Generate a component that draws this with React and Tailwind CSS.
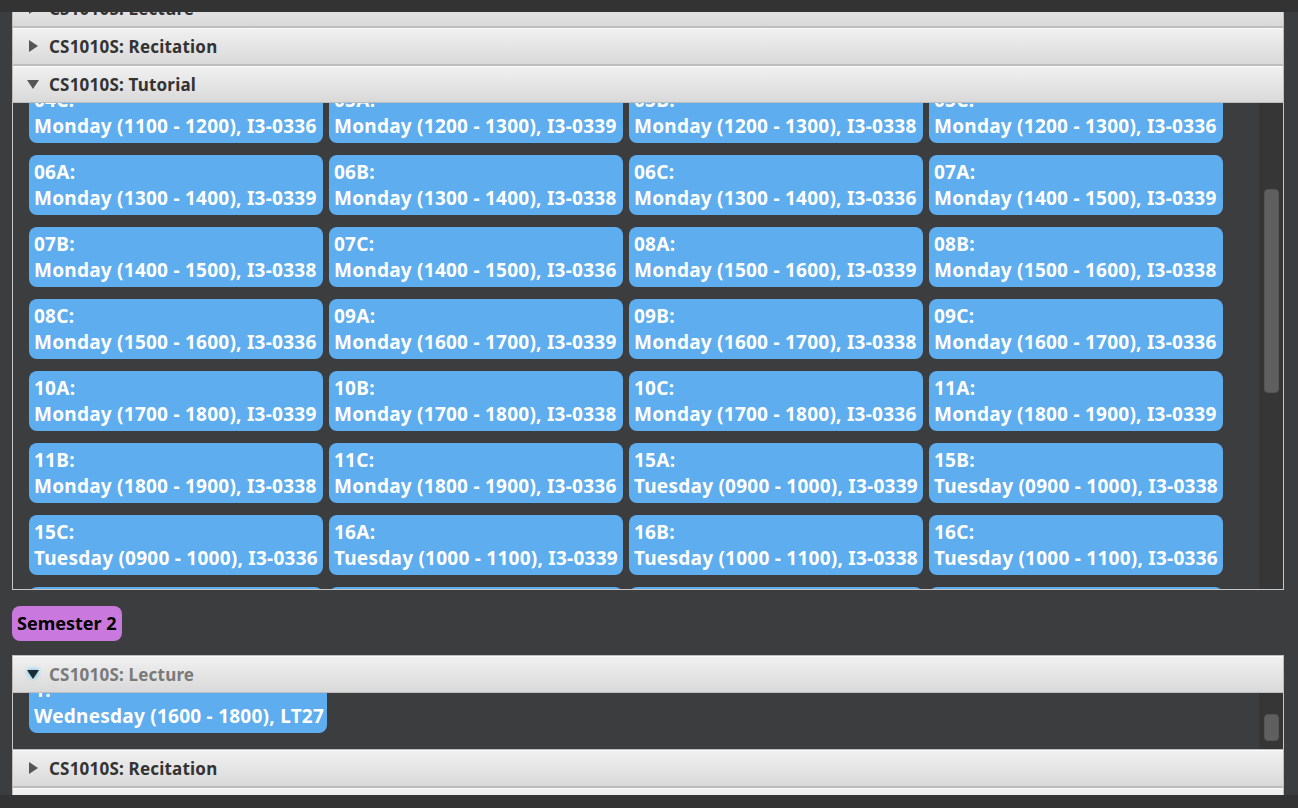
const tutorials = [
    ['04C', 'Monday (1100 - 1200), I3-0336'],
    ['05A', 'Monday (1200 - 1300), I3-0339'],
    ['05B', 'Monday (1200 - 1300), I3-0338'],
    ['05C', 'Monday (1200 - 1300), I3-0336'],
    ['06A', 'Monday (1300 - 1400), I3-0339'],
    ['06B', 'Monday (1300 - 1400), I3-0338'],
    ['06C', 'Monday (1300 - 1400), I3-0336'],
    ['07A', 'Monday (1400 - 1500), I3-0339'],
    ['07B', 'Monday (1400 - 1500), I3-0338'],
    ['07C', 'Monday (1400 - 1500), I3-0336'],
    ['08A', 'Monday (1500 - 1600), I3-0339'],
    ['08B', 'Monday (1500 - 1600), I3-0338'],
    ['08C', 'Monday (1500 - 1600), I3-0336'],
    ['09A', 'Monday (1600 - 1700), I3-0339'],
    ['09B', 'Monday (1600 - 1700), I3-0338'],
    ['09C', 'Monday (1600 - 1700), I3-0336'],
    ['10A', 'Monday (1700 - 1800), I3-0339'],
    ['10B', 'Monday (1700 - 1800), I3-0338'],
    ['10C', 'Monday (1700 - 1800), I3-0336'],
    ['11A', 'Monday (1800 - 1900), I3-0339'],
    ['11B', 'Monday (1800 - 1900), I3-0338'],
    ['11C', 'Monday (1800 - 1900), I3-0336'],
    ['15A', 'Tuesday (0900 - 1000), I3-0339'],
    ['15B', 'Tuesday (0900 - 1000), I3-0338'],
    ['15C', 'Tuesday (0900 - 1000), I3-0336'],
    ['16A', 'Tuesday (1000 - 1100), I3-0339'],
    ['16B', 'Tuesday (1000 - 1100), I3-0338'],
    ['16C', 'Tuesday (1000 - 1100), I3-0336'],
    ['17A', 'Tuesday (1100 - 1200), I3-0339'],
    ['17B', 'Tuesday (1100 - 1200), I3-0338'],
    ['17C', 'Tuesday (1100 - 1200), I3-0336'],
    ['18A', 'Tuesday (1200 - 1300), I3-0339'],
];

const font = { fontFamily: '"Noto Sans", "Open Sans", sans-serif' };

function Arrow({ open, focused }) {
    return (
        <svg
            width="14"
            height="14"
            viewBox="0 0 14 14"
            className={focused ? 'drop-shadow-[0_0_2px_#29c4ff]' : ''}
        >
            {open ? (
                <polygon points="1,3 13,3 7,12" fill={focused ? '#1f2a33' : '#555'} />
            ) : (
                <polygon points="3,1 12,7 3,13" fill="#555" />
            )}
        </svg>
    );
}

function Header({ title, open, focused }) {
    return (
        <div className="h-[38px] shrink-0 flex items-center pl-[13px] gap-[9px] border border-[#bdbdbd] bg-gradient-to-b from-[#f1f1f1] to-[#d9d9d9] shadow-[inset_0_1px_0_#fafafa]">
            <Arrow open={open} focused={focused} />
            <span className={`text-[17px] tracking-[0.2px] font-bold pt-[1px] ${focused ? 'text-[#7a7a7a]' : 'text-[#333]'}`}>{title}</span>
        </div>
    );
}

function SlotCard({ code, text, wide }) {
    return (
        <div className={`${wide ? 'w-[298px]' : 'w-[294px]'} h-[60px] shrink-0 rounded-[8px] bg-[#5eadee] px-[5px] py-[4px] text-white text-[19px] tracking-[0.25px] font-bold leading-[26px] whitespace-nowrap`}>
            <div>{code}:</div>
            <div>{text}</div>
        </div>
    );
}

function ScrollTrack({ top, height }) {
    return (
        <div className="w-[24px] shrink-0 bg-[#363636] flex justify-center">
            <div
                className="w-[15px] rounded-[4px] bg-[#5f5f5f] border border-[#555]"
                style={{ marginTop: top, height }}
            />
        </div>
    );
}

export default function App() {
    return (
        <div className="h-screen w-full overflow-hidden bg-[#3c3d3f] flex flex-col" style={font}>
            <div className="h-[12px] shrink-0 bg-[#333333]" />

            <div className="flex-1 overflow-hidden px-[12px] pr-[14px] flex flex-col">
                {/* Semester 1 (scrolled) */}
                <div className="h-[15px] shrink-0 overflow-hidden flex flex-col justify-end">
                    <Header title="CS1010S: Lecture" />
                </div>
                <Header title="CS1010S: Recitation" />
                <Header title="CS1010S: Tutorial" open />
                <div className="h-[487px] shrink-0 flex border border-t-0 border-[#c8c8c8]">
                    <div className="flex-1 overflow-hidden pl-[16px]">
                        <div className="-mt-[20px] grid grid-cols-[repeat(4,294px)] gap-x-[6px] gap-y-[12px]">
                            {tutorials.map(([code, text]) => (
                                <SlotCard key={code} code={code} text={text} />
                            ))}
                        </div>
                    </div>
                    <ScrollTrack top={86} height={204} />
                </div>

                <div className="pt-[16px] pb-[14px]">
                    <span className="inline-block h-[35px] px-[5px] rounded-[8px] bg-[#c978dd] text-black text-[18px] font-bold leading-[35px]">
                        Semester 2
                    </span>
                </div>

                {/* Semester 2 */}
                <Header title="CS1010S: Lecture" open focused />
                <div className="h-[56px] shrink-0 flex border border-t-0 border-b-0 border-[#c8c8c8]">
                    <div className="flex-1 overflow-hidden pl-[16px]">
                        <div className="-mt-[20px]">
                            <SlotCard code="1" text="Wednesday (1600 - 1800), LT27" wide />
                        </div>
                    </div>
                    <ScrollTrack top={21} height={27} />
                </div>
                <Header title="CS1010S: Recitation" />
                <Header title="CS1010S: Tutorial" />
            </div>

            <div className="h-[13px] shrink-0 bg-[#333333]" />
        </div>
    );
}
